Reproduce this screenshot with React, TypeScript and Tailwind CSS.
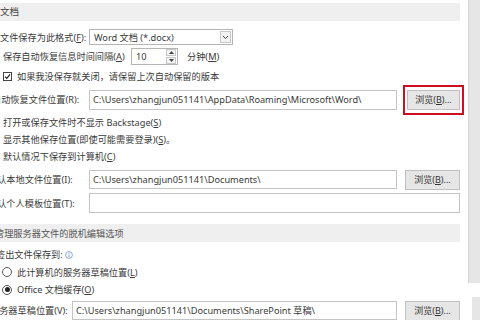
import React from "react";

const font = { fontFamily: '"Noto Sans", "Noto Sans CJK SC", sans-serif' };

function Browse({ w = "w-[55px]" }: { w?: string }) {
  return (
    <div
      className={`${w} h-[20px] shrink-0 bg-[#e6e6e6] border border-[#c0c0c0] flex items-center justify-center text-[9px] text-[#333]`}
    >
      浏览(<span className="underline">B</span>)...
    </div>
  );
}

function Radio({ on }: { on?: boolean }) {
  return (
    <div className="w-[10px] h-[10px] rounded-full border border-[#555] bg-white flex items-center justify-center shrink-0">
      {on && <div className="w-[5px] h-[5px] rounded-full bg-[#222]" />}
    </div>
  );
}

export default function App() {
  return (
    <div
      className="w-[480px] h-[320px] overflow-hidden bg-white flex text-[9.2px] text-[#3a3a3a] leading-none whitespace-nowrap"
      style={font}
    >
      <div className="w-[468px] shrink-0 flex flex-col relative">
        {/* section: 文档 */}
        <div className="mt-[3px] h-[19px] w-[460px] bg-[#efefef] flex items-center text-[9.5px] text-[#444]">
          文档
        </div>

        <div className="mt-[8px] h-[16px] flex items-center">
          <div className="w-[89px] shrink-0">
            文件保存为此格式(<span className="underline">F</span>):
          </div>
          <div className="w-[144px] h-[16px] border border-[#b5b5b5] flex items-center justify-between pl-[4px]">
            <span>Word 文档 (*.docx)</span>
            <div className="w-[11px] h-[12px] mr-[1px] border border-[#c8c8c8] bg-[#f3f3f3] flex items-center justify-center">
              <svg width="7" height="5" viewBox="0 0 7 5">
                <path d="M1 1 L3.5 3.5 L6 1" stroke="#444" strokeWidth="1" fill="none" />
              </svg>
            </div>
          </div>
        </div>

        <div className="mt-[3px] h-[17px] flex items-center">
          <div className="w-[131px] shrink-0 pl-[3px]">
            保存自动恢复信息时间间隔(<span className="underline">A</span>)
          </div>
          <div className="w-[47px] h-[17px] border border-[#b5b5b5] flex items-center justify-between pl-[4px]">
            <span>10</span>
            <div className="w-[10px] h-[15px] flex flex-col gap-[1px] mr-[1px]">
              <div className="flex-1 border border-[#c8c8c8] bg-[#f3f3f3] flex items-center justify-center">
                <svg width="5" height="3" viewBox="0 0 5 3"><path d="M0 3 L2.5 0 L5 3 Z" fill="#444" /></svg>
              </div>
              <div className="flex-1 border border-[#c8c8c8] bg-[#f3f3f3] flex items-center justify-center">
                <svg width="5" height="3" viewBox="0 0 5 3"><path d="M0 0 L2.5 3 L5 0 Z" fill="#444" /></svg>
              </div>
            </div>
          </div>
          <div className="ml-[9px]">
            分钟(<span className="underline">M</span>)
          </div>
        </div>

        <div className="mt-[4px] h-[16px] flex items-center pl-[3px] gap-[5px]">
          <div className="w-[9px] h-[9px] border border-[#444] bg-white flex items-center justify-center">
            <svg width="7" height="7" viewBox="0 0 7 7">
              <path d="M1 3.6 L2.8 5.4 L6 1.4" stroke="#222" strokeWidth="1.2" fill="none" />
            </svg>
          </div>
          <span>如果我没保存就关闭，请保留上次自动保留的版本</span>
        </div>

        <div className="mt-[5px] h-[20px] flex items-center">
          <div className="w-[89px] shrink-0 overflow-hidden">
            <span className="-ml-[8px] inline-block">
              自动恢复文件位置(<span className="underline">R</span>):
            </span>
          </div>
          <div className="w-[308px] h-[20px] border border-[#c4c4c4] flex items-center pl-[3px]">
            C:\Users\zhangjun051141\AppData\Roaming\Microsoft\Word\
          </div>
          <div className="ml-[10px] relative">
            <Browse w="w-[53px]" />
            <div className="absolute -left-[4px] -top-[5px] w-[61px] h-[30px] border-2 border-[#cc1020]" />
          </div>
        </div>

        <div className="mt-[4px] h-[18px] flex items-center pl-[3px]">
          打开或保存文件时不显示 Backstage(<span className="underline">S</span>)
        </div>
        <div className="h-[18px] flex items-center pl-[3px]">
          显示其他保存位置(即使可能需要登录)(<span className="underline">S</span>)。
        </div>
        <div className="h-[18px] flex items-center pl-[3px]">
          默认情况下保存到计算机(<span className="underline">C</span>)
        </div>

        <div className="mt-[5px] h-[19px] flex items-center">
          <div className="w-[89px] shrink-0 overflow-hidden">
            <span className="-ml-[12px] inline-block">
              默认本地文件位置(<span className="underline">I</span>):
            </span>
          </div>
          <div className="w-[308px] h-[19px] border border-[#c4c4c4] flex items-center pl-[3px]">
            C:\Users\zhangjun051141\Documents\
          </div>
          <div className="ml-[8px]">
            <Browse />
          </div>
        </div>

        <div className="mt-[4px] h-[20px] flex items-center">
          <div className="w-[89px] shrink-0 overflow-hidden">
            <span className="-ml-[12px] inline-block">
              默认个人模板位置(<span className="underline">T</span>):
            </span>
          </div>
          <div className="w-[371px] h-[20px] border border-[#c4c4c4]" />
        </div>

        {/* section: 脱机编辑 */}
        <div className="mt-[11px] h-[19px] w-[460px] bg-[#efefef] flex items-center overflow-hidden text-[#555]">
          <span className="-ml-[5px]">管理服务器文件的脱机编辑选项</span>
        </div>

        <div className="mt-[4px] h-[18px] flex items-center overflow-hidden">
          <span className="-ml-[4px]">签出文件保存到:</span>
          <svg className="ml-[2px]" width="8" height="8" viewBox="0 0 8 8">
            <circle cx="4" cy="4" r="3.4" stroke="#6b8fc9" strokeWidth="0.8" fill="none" />
            <path d="M4 3.4 V6" stroke="#6b8fc9" strokeWidth="0.9" />
            <circle cx="4" cy="2.2" r="0.5" fill="#6b8fc9" />
          </svg>
        </div>
        <div className="h-[18px] flex items-center pl-[2px] gap-[5px]">
          <Radio />
          <span>
            此计算机的服务器草稿位置(<span className="underline">L</span>)
          </span>
        </div>
        <div className="h-[19px] flex items-center pl-[2px] gap-[5px]">
          <Radio on />
          <span>
            Office 文档缓存(<span className="underline">O</span>)
          </span>
        </div>

        <div className="mt-[2px] h-[19px] flex items-center">
          <div className="w-[72px] shrink-0 overflow-hidden">
            <span className="-ml-[10px] inline-block">
              服务器草稿位置(<span className="underline">V</span>):
            </span>
          </div>
          <div className="w-[325px] h-[19px] border border-[#c4c4c4] flex items-center pl-[3px] overflow-hidden">
            C:\Users\zhangjun051141\Documents\SharePoint 草稿\
          </div>
          <div className="ml-[8px]">
            <Browse />
          </div>
        </div>
      </div>

      <div className="w-[12px] shrink-0 flex flex-col">
        <div className="h-[283px] bg-[#e6e6e6] border-l border-[#d6d6d6]" />
        <div className="h-[14px]" />
        <div className="flex-1 ml-[4px] bg-[#e6e6e6]" />
      </div>
    </div>
  );
}
